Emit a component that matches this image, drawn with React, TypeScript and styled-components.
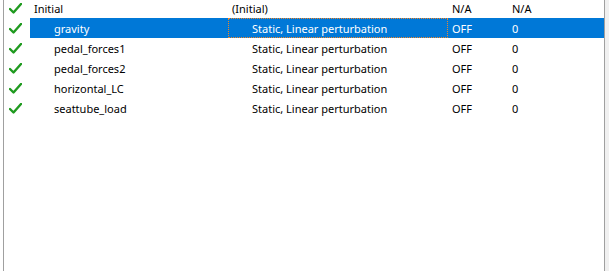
import React from "react";
import styled, { createGlobalStyle } from "styled-components";

const Global = createGlobalStyle`
  html, body { margin: 0; padding: 0; background: #ffffff; }
  body { font-family: "Segoe UI", "Noto Sans", "Liberation Sans", sans-serif; font-size: 11px; color: #000; }
`;

const Frame = styled.div`
  display: flex;
  width: 609px;
  height: 271px;
  overflow: hidden;
  background: #ffffff;
`;

const LeftGap = styled.div`
  width: 3px;
  flex: none;
  background: #ffffff;
`;

const ListView = styled.div`
  flex: 1;
  border-left: 1px solid #a0a0a0;
  border-right: 1px solid #a0a0a0;
  background: #ffffff;
  overflow: hidden;
`;

const RightStrip = styled.div`
  width: 4px;
  flex: none;
  background: #f0f0f0;
`;

const Rows = styled.div`
  margin-top: -2px;
  display: flex;
  flex-direction: column;
`;

const Row = styled.div`
  display: grid;
  grid-template-columns: 26px 198px 220px 60px 1fr;
  height: 20px;
  align-items: center;
  white-space: nowrap;
`;

const IconCell = styled.div`
  display: flex;
  align-items: center;
  padding-left: 5px;
  height: 20px;
`;

const Cell = styled.div<{ $sel?: boolean; $indent?: number; $focus?: boolean }>`
  position: relative;
  height: 20px;
  display: flex;
  align-items: center;
  box-sizing: border-box;
  padding-left: ${(p) => 4 + (p.$indent ?? 0)}px;
  background: ${(p) => (p.$sel ? "#0078d7" : "transparent")};
  color: ${(p) => (p.$sel ? "#ffffff" : "#000000")};
  &::after {
    content: "";
    display: ${(p) => (p.$focus ? "block" : "none")};
    position: absolute;
    inset: 0;
    border: 1px dotted #f0862a;
    pointer-events: none;
  }
`;

const Check = () => (
  <svg width="13" height="11" viewBox="0 0 13 11">
    <path d="M1 6 L4.5 9.5 L12 1" fill="none" stroke="#1f9a1f" strokeWidth="2.4" strokeLinecap="round" strokeLinejoin="round" />
  </svg>
);

type Item = { name: string; level: number; proc: string; c3: string; c4: string; sel?: boolean };

const items: Item[] = [
  { name: "Initial", level: 0, proc: "(Initial)", c3: "N/A", c4: "N/A" },
  { name: "gravity", level: 1, proc: "Static, Linear perturbation", c3: "OFF", c4: "0", sel: true },
  { name: "pedal_forces1", level: 1, proc: "Static, Linear perturbation", c3: "OFF", c4: "0" },
  { name: "pedal_forces2", level: 1, proc: "Static, Linear perturbation", c3: "OFF", c4: "0" },
  { name: "horizontal_LC", level: 1, proc: "Static, Linear perturbation", c3: "OFF", c4: "0" },
  { name: "seattube_load", level: 1, proc: "Static, Linear perturbation", c3: "OFF", c4: "0" },
];

export default function App() {
  return (
    <>
      <Global />
      <Frame>
        <LeftGap />
        <ListView>
          <Rows>
            {items.map((it) => (
              <Row key={it.name}>
                <IconCell>
                  <Check />
                </IconCell>
                <Cell $sel={it.sel} $indent={it.level * 20}>{it.name}</Cell>
                <Cell $sel={it.sel} $focus={it.sel} $indent={it.level * 20}>{it.proc}</Cell>
                <Cell $sel={it.sel}>{it.c3}</Cell>
                <Cell $sel={it.sel}>{it.c4}</Cell>
              </Row>
            ))}
          </Rows>
        </ListView>
        <RightStrip />
      </Frame>
    </>
  );
}
